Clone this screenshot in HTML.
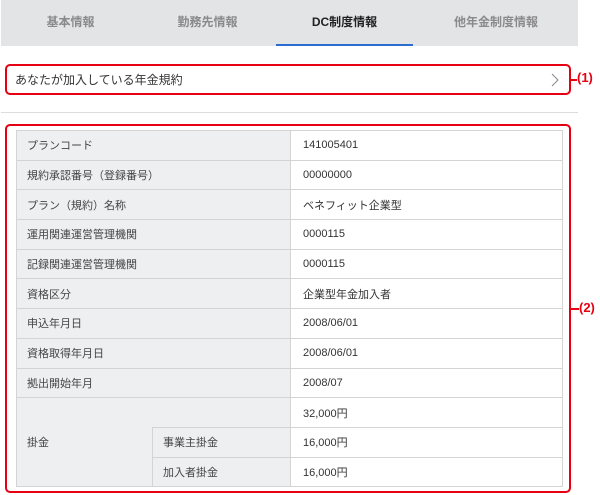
<!DOCTYPE html>
<html><head><meta charset="utf-8"><style>
*{margin:0;padding:0;box-sizing:border-box}
body{width:600px;height:495px;background:#fff;font-family:"Liberation Sans","Noto Sans CJK JP",sans-serif;position:relative;overflow:hidden;color:#333}
.tabs{position:absolute;left:1px;top:0;width:577px;height:46px;background:#e3e4e6}
.tab{position:absolute;top:0;width:137px;text-align:center;line-height:44px;font-size:12px;font-weight:bold;color:#8a8a8a}
.tab.on{color:#222}
.tab.on:after{content:"";position:absolute;left:0;right:0;bottom:-2px;height:2px;background:#2a6ccf}
.box{position:absolute;border:2.5px solid #e60012;border-radius:5px}
.lbl{position:absolute;color:#e60012;font-weight:bold;font-size:13px}
.tick{position:absolute;height:2px;background:#e60012}
.sep{position:absolute;left:1px;top:112px;width:577px;height:1px;background:#ddd}
table{position:absolute;left:16px;top:130px;width:547px;border-collapse:collapse;font-size:11px}
td{border:1px solid #d4d4d4;height:29.7px;padding:0 0 0 10px}
td.h{background:#eeeff1;color:#444}
td.v{background:#fff;color:#333;padding-left:12px}
</style></head><body>
<div class="tabs"><div class="tab" style="left:1px">基本情報</div><div class="tab" style="left:138px">勤務先情報</div><div class="tab on" style="left:275px">DC制度情報</div><div class="tab" style="left:412px;width:166px">他年金制度情報</div></div>
<div class="box" style="left:5px;top:64px;width:566px;height:31px"></div>
<div style="position:absolute;left:15px;top:71px;font-size:12px;color:#333">あなたが加入している年金規約</div>
<svg style="position:absolute;left:551px;top:73px" width="8" height="14"><path d="M1 1 L7 7 L1 13" fill="none" stroke="#888" stroke-width="1"/></svg>
<div class="tick" style="left:571px;top:79px;width:6px"></div>
<div class="lbl" style="left:577px;top:70px">(1)</div>
<div class="sep"></div>
<div class="box" style="left:5px;top:124px;width:566px;height:369px"></div>
<div class="tick" style="left:571px;top:308px;width:8px"></div>
<div class="lbl" style="left:579px;top:300px">(2)</div>
<table>
<colgroup><col style="width:136px"><col style="width:138px"><col></colgroup>
<tr><td class="h" colspan="2">プランコード</td><td class="v">141005401</td></tr>
<tr><td class="h" colspan="2">規約承認番号（登録番号）</td><td class="v">00000000</td></tr>
<tr><td class="h" colspan="2">プラン（規約）名称</td><td class="v">ベネフィット企業型</td></tr>
<tr><td class="h" colspan="2">運用関連運営管理機関</td><td class="v">0000115</td></tr>
<tr><td class="h" colspan="2">記録関連運営管理機関</td><td class="v">0000115</td></tr>
<tr><td class="h" colspan="2">資格区分</td><td class="v">企業型年金加入者</td></tr>
<tr><td class="h" colspan="2">申込年月日</td><td class="v">2008/06/01</td></tr>
<tr><td class="h" colspan="2">資格取得年月日</td><td class="v">2008/06/01</td></tr>
<tr><td class="h" colspan="2">拠出開始年月</td><td class="v">2008/07</td></tr>
<tr><td class="h" colspan="2" style="border-bottom:0"></td><td class="v">32,000円</td></tr>
<tr><td class="h" style="border-top:0;border-bottom:0">掛金</td><td class="h">事業主掛金</td><td class="v">16,000円</td></tr>
<tr><td class="h" style="border-top:0"></td><td class="h">加入者掛金</td><td class="v">16,000円</td></tr>
</table>
</body></html>
